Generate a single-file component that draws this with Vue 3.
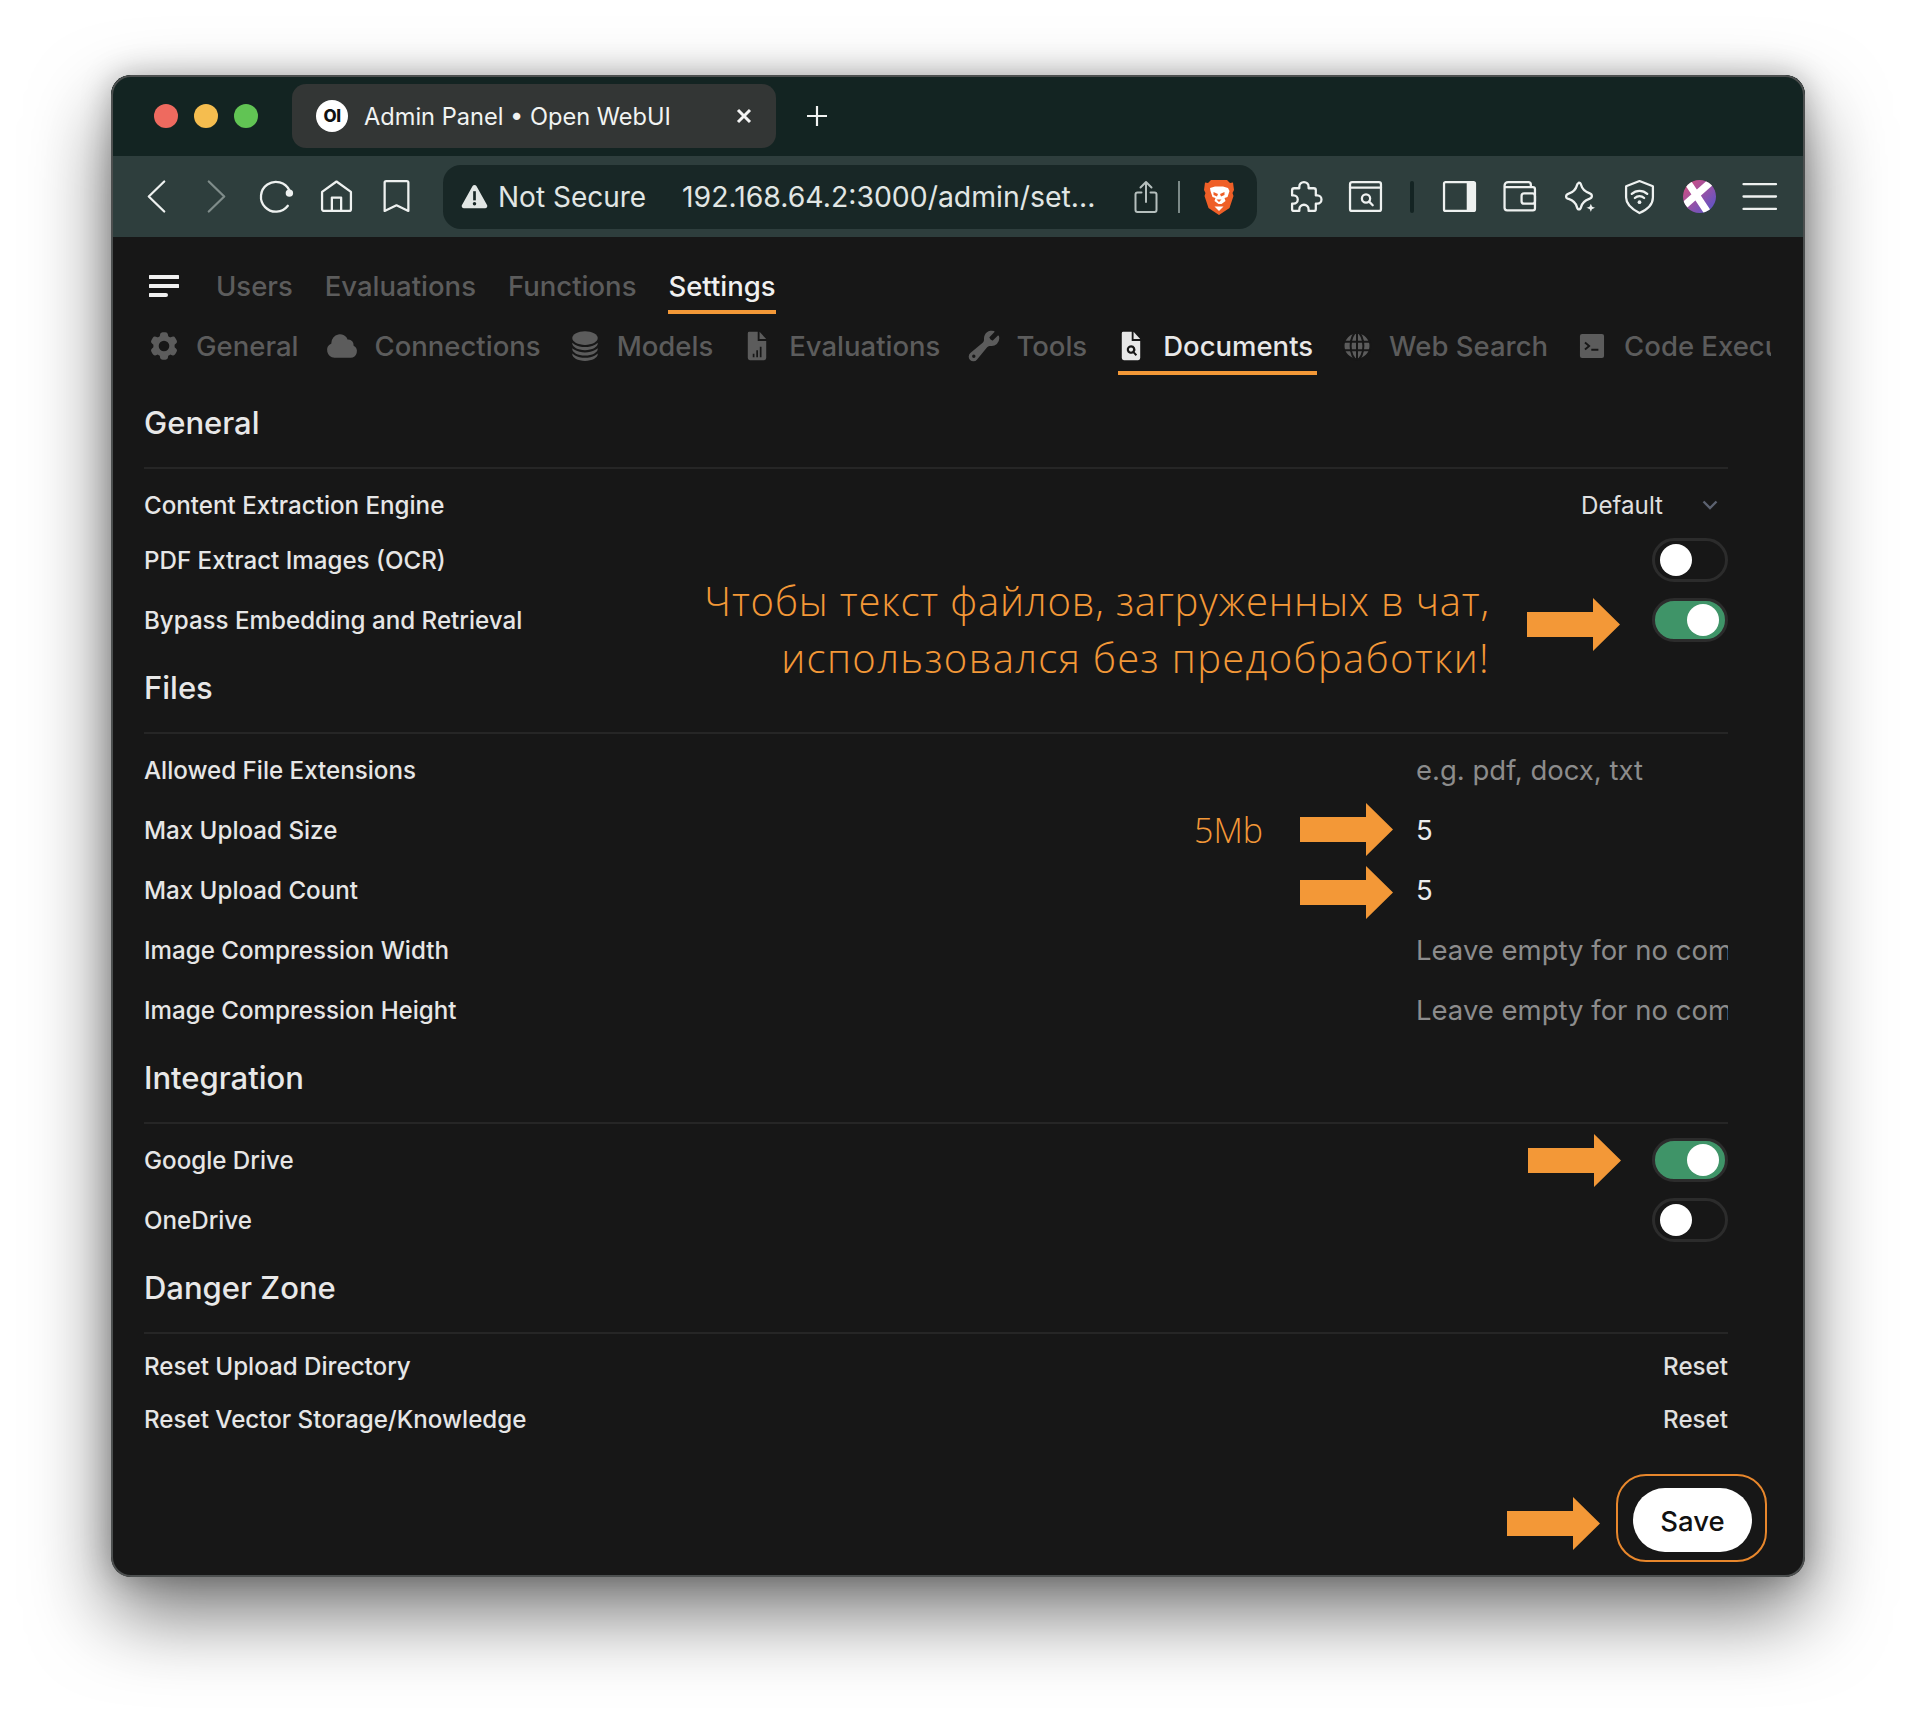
<template>
  <div class="page">
    <div class="window">
      <!-- title bar -->
      <div class="titlebar">
        <div class="lights">
          <span class="light red"></span>
          <span class="light yellow"></span>
          <span class="light green"></span>
        </div>
        <div class="tab">
          <span class="favicon">OI</span>
          <span class="tab-title">Admin Panel • Open WebUI</span>
          <svg class="tab-close" viewBox="0 0 16 16"><path d="M2 2l12 12M14 2L2 14" /></svg>
        </div>
        <svg class="new-tab" viewBox="0 0 24 24"><path d="M12 2v20M2 12h20" /></svg>
      </div>

      <!-- toolbar -->
      <div class="toolbar">
        <button class="tool"><svg viewBox="0 0 32 32"><path d="M23.500 1.500L8.500 16l15 14.500" /></svg></button>
        <button class="tool dim"><svg viewBox="0 0 32 32"><path d="M8.500 1.500L23.500 16l-15 14.500" /></svg></button>
        <button class="tool"><svg viewBox="0 0 32 32"><path d="M27 25A14.500 14.500 0 1 1 28.500 10" /><circle class="solid" cx="28.500" cy="12.700" r="3.600" /></svg></button>
        <button class="tool"><svg viewBox="0 0 32 32"><path d="M16 1.500L30 11.500V28a2 2 0 0 1-2 2H4a2 2 0 0 1-2-2V11.500zM11.500 30V17h9v13" /></svg></button>
        <button class="tool"><svg viewBox="0 0 32 32"><path d="M6 1h20a1.500 1.500 0 0 1 1.500 1.500V30L16 24.500 4.500 30V2.500A1.500 1.500 0 0 1 6 1z" /></svg></button>

        <div class="address">
          <svg class="warn" viewBox="0 0 28 26"><path d="M12 2.200a2.300 2.300 0 0 1 4 0l11 19.600a2.300 2.300 0 0 1-2 3.400H3a2.300 2.300 0 0 1-2-3.400z" /><rect x="12.600" y="7.500" width="2.800" height="9.500" /><circle cx="14" cy="20.500" r="1.800" /></svg>
          <span class="secure">Not Secure</span>
          <span class="url">192.168.64.2:3000/admin/set...</span>
          <svg class="share" viewBox="0 0 24 34"><path d="M7.500 12.500H3.500a2 2 0 0 0-2 2V30a2 2 0 0 0 2 2h17a2 2 0 0 0 2-2V14.500a2 2 0 0 0-2-2h-4M12 22V2M6.500 7.500L12 2l5.500 5.500" /></svg>
          <span class="addr-divider"></span>
          <svg class="brave" viewBox="0 0 30 36">
            <path class="lion-bg" d="M7 1h16l3 3 3-.500 1 7.500-1.500 3 1 3-4 12L15 36 4.500 29 .5 17l1-3L0 11l1-7.500 3 .500z" />
            <path class="lion-fg" d="M6 9l5-1.500h8L24 9l1.500 3-2 6-3 1 1 3-4 3h-3l-4-3 1-3-3-1-2-6z" />
            <path class="lion-bg" d="M9.500 13l4.500 2-1 2.500-3.500-1.500zM20.500 13L16 15l1 2.500 3.500-1.500zM12.500 20.500h5L15 23z" />
            <path class="lion-fg" d="M10.500 27.500h9L15 32z" />
          </svg>
        </div>

        <button class="tool first-ext"><svg viewBox="0 0 32 32"><path d="M10 6.500a4.500 4.500 0 0 1 9 0V8h5a2 2 0 0 1 2 2v5h1.500a4 4 0 0 1 0 8H26v5a2 2 0 0 1-2 2h-5v-1.500a4.500 4.500 0 0 0-9 0V30H5a2 2 0 0 1-2-2v-5h1.500a4 4 0 0 0 0-8H3v-5a2 2 0 0 1 2-2h5z" /></svg></button>
        <button class="tool"><svg viewBox="0 0 32 32"><rect x="1" y="2" width="30" height="28" rx="2" /><path d="M1 7.500h30" /><circle cx="16.500" cy="18" r="4" /><path d="M19.500 21l3.500 3.500" /></svg></button>
        <span class="tool-sep"></span>
        <button class="tool"><svg viewBox="0 0 32 32"><rect x="1" y="2" width="30" height="28" rx="1.500" /><rect class="solid" x="23" y="2" width="8" height="28" /></svg></button>
        <button class="tool"><svg viewBox="0 0 32 32"><path d="M27 7V4.500A2.500 2.500 0 0 0 24.500 2H5a3.500 3.500 0 0 0-3.500 3.500V27A2.500 2.500 0 0 0 4 29.500h25a2 2 0 0 0 2-2V9a2 2 0 0 0-2-2H2" /><rect x="18" y="13" width="13" height="10" rx="2.500" /></svg></button>
        <button class="tool"><svg viewBox="0 0 32 32"><path d="M15.500 2.500c1.200 0 1.700 1 2 2.200 1 4 3.500 6.500 8 8 1.500.5 2.500 1.300 2.500 2.800s-1 2.300-2.500 2.800c-4.500 1.500-7 4-8 8-.3 1.200-.8 2.200-2 2.200s-1.700-1-2-2.200c-1-4-3.500-6.500-8-8C4 18.300 3 17.500 3 16s1-2.300 2.500-2.800c4.500-1.500 7-4 8-8 .3-1.200.8-2.200 2-2.200z" /><path class="solid cutout" d="M27 21l1.700 4.300 4.300 1.700-4.300 1.700L27 33l-1.700-4.300L21 27l4.300-1.700z" /></svg></button>
        <button class="tool"><svg viewBox="0 0 32 32"><path d="M16 1l13 5v11c0 7-6 12-13 15C10 29 3 24 3 17V6z" /><path d="M8.500 13.500a11 11 0 0 1 15 0M11.500 17.500a6.500 6.500 0 0 1 9 0" /><circle class="solid" cx="16" cy="21.500" r="1.800" /></svg></button>
        <button class="tool">
          <svg viewBox="0 0 32 32" class="avatar">
            <defs>
              <linearGradient id="ava" x1="0" y1="0" x2="1" y2="1">
                <stop offset="0" stop-color="#dc4f7c" />
                <stop offset="1" stop-color="#5154cf" />
              </linearGradient>
              <clipPath id="avaclip"><circle cx="16" cy="16" r="16" /></clipPath>
            </defs>
            <circle class="disc" cx="16" cy="16" r="16" fill="url(#ava)" />
            <path clip-path="url(#avaclip)" d="M5 3l20 30M28 1L2 24" />
          </svg>
        </button>
        <button class="tool"><svg viewBox="0 0 32 32"><path d="M.5 4H32M.5 16H32M.5 28H32" /></svg></button>
      </div>

      <!-- admin page -->
      <div class="content">
        <nav class="admin-nav">
          <svg class="menu" viewBox="0 0 30 22"><path d="M1 2h28M1 11h28M1 20h16" /></svg>
          <span v-for="item in navItems" :key="item" class="nav-item" :class="{ active: item === 'Settings' }">{{ item }}</span>
        </nav>

        <div class="subtabs">
          <span class="subtab">
            <svg viewBox="0 0 24 24"><path fill-rule="evenodd" d="M11.078 2.250c-.917 0-1.699.663-1.850 1.567L9.050 4.889c-.020.120-.115.260-.297.348a7.493 7.493 0 0 0-.986.570c-.166.115-.334.126-.450.083L6.300 5.508a1.875 1.875 0 0 0-2.282.819l-.922 1.597a1.875 1.875 0 0 0 .432 2.385l.840.692c.095.078.170.229.154.430a7.598 7.598 0 0 0 0 1.139c.015.200-.059.352-.153.430l-.841.692a1.875 1.875 0 0 0-.432 2.385l.922 1.597a1.875 1.875 0 0 0 2.282.818l1.019-.382c.115-.043.283-.031.450.082.312.214.641.405.985.570.182.088.277.228.297.350l.178 1.071c.151.904.933 1.567 1.850 1.567h1.844c.916 0 1.699-.663 1.850-1.567l.178-1.072c.020-.120.114-.260.297-.349.344-.165.673-.356.985-.570.167-.114.335-.125.450-.082l1.020.382a1.875 1.875 0 0 0 2.280-.819l.923-1.597a1.875 1.875 0 0 0-.432-2.385l-.840-.692c-.095-.078-.170-.229-.154-.430a7.614 7.614 0 0 0 0-1.139c-.016-.200.059-.352.153-.430l.840-.692c.708-.582.891-1.590.433-2.385l-.922-1.597a1.875 1.875 0 0 0-2.282-.818l-1.020.382c-.114.043-.282.031-.449-.083a7.490 7.490 0 0 0-.985-.570c-.183-.087-.277-.227-.297-.348l-.179-1.072a1.875 1.875 0 0 0-1.850-1.567h-1.843ZM12 15.750a3.750 3.750 0 1 0 0-7.500 3.750 3.750 0 0 0 0 7.500Z" /></svg>
            General
          </span>
          <span class="subtab">
            <svg viewBox="0 0 24 24"><path d="M4.500 9.750a6 6 0 0 1 11.573-2.226 3.750 3.750 0 0 1 4.133 4.303A4.500 4.500 0 0 1 18 20.250H6.750a5.250 5.250 0 0 1-2.230-10.004 6.072 6.072 0 0 1-.020-.496Z" /></svg>
            Connections
          </span>
          <span class="subtab">
            <svg viewBox="0 0 24 24"><path d="M21 6.375c0 2.692-4.030 4.875-9 4.875S3 9.067 3 6.375 7.030 1.500 12 1.500s9 2.183 9 4.875Z" /><path d="M12 12.750c2.685 0 5.190-.586 7.078-1.609a8.283 8.283 0 0 0 1.897-1.384c.016.121.025.244.025.368C21 12.817 16.970 15 12 15s-9-2.183-9-4.875c0-.124.009-.247.025-.368a8.285 8.285 0 0 0 1.897 1.384C6.809 12.164 9.315 12.750 12 12.750Z" /><path d="M12 16.500c2.685 0 5.190-.586 7.078-1.609a8.282 8.282 0 0 0 1.897-1.384c.016.121.025.244.025.368 0 2.692-4.030 4.875-9 4.875s-9-2.183-9-4.875c0-.124.009-.247.025-.368a8.284 8.284 0 0 0 1.897 1.384C6.809 15.914 9.315 16.500 12 16.500Z" /><path d="M12 20.250c2.685 0 5.190-.586 7.078-1.609a8.282 8.282 0 0 0 1.897-1.384c.016.121.025.244.025.368 0 2.692-4.030 4.875-9 4.875s-9-2.183-9-4.875c0-.124.009-.247.025-.368a8.284 8.284 0 0 0 1.897 1.384C6.809 19.664 9.315 20.250 12 20.250Z" /></svg>
            Models
          </span>
          <span class="subtab">
            <svg viewBox="0 0 24 24"><path fill-rule="evenodd" d="M6.500 2H12.500v6.500H18.500v12a1.500 1.500 0 0 1-1.500 1.500H7a1.500 1.500 0 0 1-1.500-1.500V3A1 1 0 0 1 6.500 2ZM9 17.500v2.500h1.200v-2.500Zm2.500-2.500v5h1.200v-5Zm2.500-2.500v7.500h1.200v-7.500Z" /><path d="M13.800 2 18.500 7h-4.700Z" /></svg>
            Evaluations
          </span>
          <span class="subtab">
            <svg viewBox="0 0 20 20"><path fill-rule="evenodd" d="M19 5.500a4.500 4.500 0 0 1-4.791 4.490c-.873-.055-1.808.128-2.368.800l-6.024 7.230a2.724 2.724 0 1 1-3.837-3.837L9.210 8.160c.672-.560.855-1.495.800-2.368a4.500 4.500 0 0 1 5.873-4.575c.324.105.390.510.150.752L13.340 4.660a.455.455 0 0 0-.110.494 3.010 3.010 0 0 0 1.617 1.617c.170.070.363.020.493-.111l2.692-2.692c.241-.241.647-.174.752.150.140.435.216.900.216 1.382ZM4 17a1 1 0 1 0 0-2 1 1 0 0 0 0 2Z" /></svg>
            Tools
          </span>
          <span class="subtab active">
            <svg viewBox="0 0 24 24"><path fill-rule="evenodd" d="M6.500 2H12.500v6.500H18.500v12a1.500 1.500 0 0 1-1.500 1.500H7a1.500 1.500 0 0 1-1.500-1.500V3A1 1 0 0 1 6.500 2ZM12 11.500a3 3 0 1 0 1.500 5.600l1.800 1.900 1-1-1.700-1.800A3 3 0 0 0 12 11.500Zm0 1.500a1.500 1.500 0 1 1 0 3 1.500 1.500 0 0 1 0-3Z" /><path d="M13.800 2 18.500 7h-4.700Z" /></svg>
            Documents
          </span>
          <span class="subtab">
            <svg class="globe" viewBox="0 0 24 24"><circle cx="12" cy="12" r="9.500" /><ellipse cx="12" cy="12" rx="4.500" ry="9.500" /><path d="M2.500 9h19M2.500 15h19M12 2.500v19" /></svg>
            Web Search
          </span>
          <span class="subtab">
            <svg viewBox="0 0 24 24"><path fill-rule="evenodd" d="M5 3.500h14A1.500 1.500 0 0 1 20.500 5v14a1.500 1.500 0 0 1-1.500 1.500H5A1.500 1.500 0 0 1 3.500 19V5A1.500 1.500 0 0 1 5 3.500Zm2.500 5.500-.9 1 2.400 2-2.400 2 .9 1 3.500-3Zm4 5v1.400h5V14Z" /></svg>
            Code Execution
          </span>
        </div>

        <section class="section first">
          <h2>General</h2>
          <div class="rows rows-general">
            <div class="row short">
              <span class="label">Content Extraction Engine</span>
              <span class="select">Default
                <svg viewBox="0 0 16 10"><path d="M1.500 1.500L8 8l6.500-6.500" /></svg>
              </span>
            </div>
            <div class="row">
              <span class="label">PDF Extract Images (OCR)</span>
              <span class="toggle"><i></i></span>
            </div>
            <div class="row">
              <span class="label">Bypass Embedding and Retrieval</span>
              <span class="toggle on"><i></i></span>
            </div>
          </div>
        </section>

        <section class="section">
          <h2>Files</h2>
          <div class="rows">
            <div v-for="field in fileFields" :key="field.label" class="row">
              <span class="label">{{ field.label }}</span>
              <input class="field" :placeholder="field.placeholder" :value="field.value" />
            </div>
          </div>
        </section>

        <section class="section">
          <h2>Integration</h2>
          <div class="rows">
            <div class="row">
              <span class="label">Google Drive</span>
              <span class="toggle on"><i></i></span>
            </div>
            <div class="row">
              <span class="label">OneDrive</span>
              <span class="toggle"><i></i></span>
            </div>
          </div>
        </section>

        <section class="section">
          <h2>Danger Zone</h2>
          <div class="rows">
            <div class="row reset-row">
              <span class="label">Reset Upload Directory</span>
              <span class="reset">Reset</span>
            </div>
            <div class="row reset-row">
              <span class="label">Reset Vector Storage/Knowledge</span>
              <span class="reset">Reset</span>
            </div>
          </div>
        </section>

        <div class="footer">
          <button class="save">Save</button>
        </div>
      </div>

      <!-- annotations drawn over the page -->
      <div class="note note-main">
        <span class="line-one">Чтобы текст файлов, загруженных в чат,</span>
        <span class="line-two">использовался без предобработки!</span>
      </div>
      <div class="note note-size">5Mb</div>
      <svg v-for="a in arrows" :key="a" class="arrow" :class="a" viewBox="0 0 93 53">
        <polygon points="0,14 66,14 66,0 93,26.5 66,53 66,39 0,39" />
      </svg>
      <div class="save-ring"></div>
    </div>
  </div>
</template>

<script setup>
const navItems = ['Users', 'Evaluations', 'Functions', 'Settings']

const fileFields = [
  { label: 'Allowed File Extensions', placeholder: 'e.g. pdf, docx, txt', value: '' },
  { label: 'Max Upload Size', placeholder: '', value: '5' },
  { label: 'Max Upload Count', placeholder: '', value: '5' },
  { label: 'Image Compression Width', placeholder: 'Leave empty for no compression', value: '' },
  { label: 'Image Compression Height', placeholder: 'Leave empty for no compression', value: '' }
]

const arrows = ['a-bypass', 'a-size', 'a-count', 'a-drive', 'a-save']
</script>

<style>
html,
body {
  margin: 0;
  background: #fff;
}
</style>

<style scoped>
.page {
  box-sizing: border-box;
  width: 1916px;
  height: 1724px;
  padding: 75px 111px 0;
  background: #fff;
  font-family: Inter, "Liberation Sans", sans-serif;
}

.window {
  position: relative;
  width: 1694px;
  height: 1502px;
  border-radius: 20px;
  overflow: hidden;
  background: #171717;
}

.window::after {
  content: "";
  position: absolute;
  inset: 0;
  border: 2px solid #4c4f4f;
  border-radius: 20px;
  pointer-events: none;
}

.page::before {
  content: "";
  position: absolute;
  left: 111px;
  top: 75px;
  width: 1694px;
  height: 1502px;
  border-radius: 20px;
  box-shadow: 0 36px 80px rgba(0, 0, 0, 0.55), 0 0 30px rgba(0, 0, 0, 0.25);
}

.titlebar {
  display: flex;
  align-items: center;
  height: 81px;
  background: #132422;
}

.lights {
  display: flex;
  gap: 16px;
  margin-left: 43px;
  width: 138px;
}

.light {
  width: 24px;
  height: 24px;
  border-radius: 50%;
}

.red { background: #ee6a5f; }
.yellow { background: #f5bd4f; }
.green { background: #61c454; }

.tab {
  display: flex;
  align-items: center;
  box-sizing: border-box;
  width: 484px;
  height: 64px;
  margin-top: 1px;
  padding-left: 24px;
  border-radius: 14px;
  background: #333635;
  color: #f1f3f2;
}

.favicon {
  display: flex;
  align-items: center;
  justify-content: center;
  flex: none;
  width: 32px;
  height: 32px;
  border-radius: 50%;
  background: #fff;
  color: #111;
  font-size: 17px;
  font-weight: 800;
  letter-spacing: -0.5px;
}

.tab-title {
  margin-left: 16px;
  width: 372px;
  font-size: 23.6px;
  white-space: nowrap;
}

.tab-close {
  width: 16px;
  height: 16px;
  fill: none;
  stroke: #f4f4f4;
  stroke-width: 3;
}

.new-tab {
  width: 24px;
  height: 24px;
  margin-left: 29px;
  fill: none;
  stroke: #f1f3f2;
  stroke-width: 2.2;
}

.toolbar {
  display: flex;
  align-items: center;
  height: 81px;
  padding-left: 15px;
  background: #2e3e3d;
}

.tool {
  display: flex;
  align-items: center;
  justify-content: center;
  flex: none;
  width: 60px;
  height: 60px;
  padding: 0;
  border: 0;
  background: none;
}

.tool svg {
  width: 33px;
  height: 33px;
  overflow: visible;
  fill: none;
  stroke: #eef1f0;
  stroke-width: 2.2;
  stroke-linecap: round;
  stroke-linejoin: round;
}

.tool .solid {
  fill: #eef1f0;
  stroke: none;
}

.tool .cutout {
  stroke: #2e3e3d;
  stroke-width: 1.5;
}

.tool.dim svg {
  stroke: #7f8c8a;
}

.tool .avatar {
  overflow: hidden;
  stroke: #fff;
  stroke-width: 7;
  stroke-linecap: butt;
}

.tool .disc {
  stroke: none;
}

.address {
  display: flex;
  align-items: center;
  flex: none;
  box-sizing: border-box;
  width: 814px;
  height: 64px;
  margin-left: 17px;
  padding-left: 18px;
  border-radius: 18px;
  background: #182726;
  color: #e1e6e4;
}

.warn {
  flex: none;
  width: 27px;
  height: 25px;
  fill: #e1e6e4;
}

.warn rect,
.warn circle {
  fill: #182726;
}

.secure {
  margin-left: 10px;
  width: 184px;
  font-size: 28px;
  white-space: nowrap;
}

.url {
  width: 452px;
  font-size: 28.4px;
  white-space: nowrap;
}

.share {
  flex: none;
  width: 24px;
  height: 34px;
  fill: none;
  stroke: #b5bfbd;
  stroke-width: 2;
  stroke-linecap: round;
  stroke-linejoin: round;
}

.addr-divider {
  flex: none;
  width: 2px;
  height: 32px;
  margin-left: 20px;
  background: #7c8a88;
}

.brave {
  flex: none;
  width: 30px;
  height: 36px;
  margin-left: 24px;
}

.lion-bg { fill: #ef5f27; }
.lion-fg { fill: #fff; }

.first-ext {
  margin-left: 18px;
}

.tool-sep {
  flex: none;
  width: 4px;
  height: 32px;
  margin: 0 15px;
  border-radius: 2px;
  background: #142423;
}

.content {
  height: 1340px;
  padding: 23px 77px 0 33px;
  color: #e6e6e6;
}

.admin-nav {
  display: flex;
  align-items: flex-start;
  gap: 32px;
  margin-left: -33px;
  padding-left: 38px;
}

.menu {
  flex: none;
  width: 30px;
  height: 22px;
  margin: 15px 0 0;
  fill: none;
  stroke: #f1f1f1;
  stroke-width: 4;
  stroke-linecap: round;
}

.admin-nav .menu + .nav-item {
  margin-left: 5px;
}

.nav-item {
  box-sizing: border-box;
  height: 54px;
  line-height: 52px;
  border-bottom: 4px solid transparent;
  color: #5c5c5c;
  font-size: 27.5px;
  font-weight: 500;
}

.nav-item.active {
  color: #f0f0f0;
  border-bottom-color: #f39837;
}

.subtabs {
  display: flex;
  gap: 27px;
  box-sizing: border-box;
  width: 1660px;
  margin: 7px 0 0 -33px;
  padding-left: 40px;
  overflow: hidden;
}

.subtab {
  display: flex;
  flex: none;
  align-items: center;
  gap: 15px;
  box-sizing: border-box;
  height: 54px;
  padding: 0 4px 0 0;
  border-bottom: 4px solid transparent;
  color: #5c5c5c;
  font-size: 27.5px;
  font-weight: 500;
}

.subtab svg {
  flex: none;
  width: 34px;
  height: 34px;
  margin-left: -4px;
  fill: #5c5c5c;
}

.subtab .globe {
  stroke: #171717;
  stroke-width: 1.4;
}

.subtab.active {
  color: #e8e8e8;
  border-bottom-color: #f39837;
}

.subtab.active svg {
  fill: #e8e8e8;
}

.section {
  margin-top: 16px;
}

.section.first {
  margin-top: 26px;
}

h2 {
  height: 44px;
  margin: 0 0 22px;
  padding: 0;
  line-height: 44px;
  font-size: 31px;
  font-weight: 500;
  color: #e8e8e8;
}

.rows {
  padding-top: 6px;
  border-top: 2px solid #262626;
}

.rows-general {
  padding-top: 11px;
}

.row {
  display: flex;
  align-items: center;
  justify-content: space-between;
  height: 60px;
}

.row.short {
  height: 50px;
}

.row.reset-row {
  height: 53px;
}

.label {
  font-size: 24.15px;
  font-weight: 500;
  color: #e6e6e6;
}

.select {
  display: flex;
  align-items: center;
  gap: 39px;
  margin-right: 10px;
  font-size: 24.15px;
  font-weight: 400;
  color: #e0e0e0;
}

.select svg {
  width: 16px;
  height: 10px;
  fill: none;
  stroke: #5c6270;
  stroke-width: 2.4;
}

.toggle {
  position: relative;
  display: block;
  box-sizing: border-box;
  width: 76px;
  height: 44px;
  border: 3px solid #2c2c2c;
  border-radius: 22px;
  background: #171717;
}

.toggle i {
  position: absolute;
  left: 5px;
  top: 3px;
  width: 32px;
  height: 32px;
  border-radius: 50%;
  background: #fff;
}

.toggle.on {
  background: #3f9468;
}

.toggle.on i {
  left: 32px;
}

.field {
  box-sizing: border-box;
  width: 312px;
  padding: 0;
  border: 0;
  outline: 0;
  background: transparent;
  color: #ececec;
  font-family: inherit;
  font-size: 27.5px;
  font-weight: 400;
}

.field::placeholder {
  color: #8c8c8c;
  opacity: 1;
}

.reset {
  font-size: 24.15px;
  font-weight: 500;
  color: #e0e0e0;
}

.footer {
  display: flex;
  justify-content: flex-end;
  margin-top: 42px;
}

.save {
  width: 119px;
  height: 64px;
  margin-right: -24px;
  padding: 2px 0 0;
  border: 0;
  border-radius: 32px;
  background: #fff;
  color: #111;
  font-family: inherit;
  font-size: 27.5px;
  font-weight: 500;
}

.note {
  position: absolute;
  color: #f39837;
  font-family: "Open Sans", sans-serif;
  font-weight: 300;
  white-space: nowrap;
}

.note-main {
  right: 315px;
  top: 497px;
  font-size: 40px;
  line-height: 57px;
  text-align: right;
}

.line-one,
.line-two {
  display: block;
}

.line-one {
  letter-spacing: 0.85px;
}

.line-two {
  letter-spacing: 1.35px;
}

.note-size {
  left: 1083px;
  top: 733px;
  font-size: 34px;
  line-height: 44px;
}

.arrow {
  position: absolute;
  width: 93px;
  height: 53px;
  fill: #f39837;
}

.a-bypass { left: 1416px; top: 523px; }
.a-size { left: 1189px; top: 728px; }
.a-count { left: 1189px; top: 791px; }
.a-drive { left: 1417px; top: 1059px; }
.a-save { left: 1396px; top: 1422px; }

.save-ring {
  position: absolute;
  left: 1505px;
  top: 1399px;
  width: 151px;
  height: 88px;
  box-sizing: border-box;
  border: 2.5px solid #e8872c;
  border-radius: 30px;
}
</style>
